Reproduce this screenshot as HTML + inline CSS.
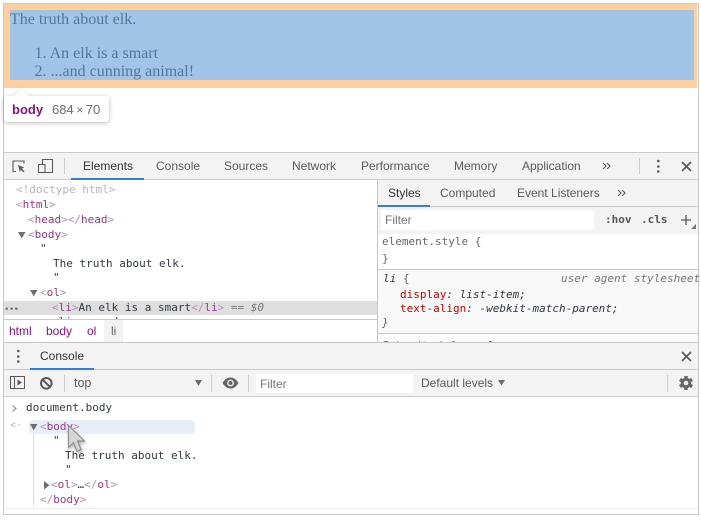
<!DOCTYPE html>
<html><head><meta charset="utf-8">
<style>
html,body{margin:0;padding:0;background:#fff;width:701px;height:521px;overflow:hidden}
#r{position:relative;width:701px;height:521px;overflow:hidden;background:#fff;filter:blur(.3px)}
#r div,#r span.a,#r svg{position:absolute}
.b{background:#c8c8c8}
.t{font:12px/14px "Liberation Sans",sans-serif;color:#5a5a5a;white-space:nowrap;height:14px}
.m{font:11px/14px "DejaVu Sans Mono","Liberation Mono",monospace;color:#303942;white-space:pre;height:14px;margin-top:1px}
.s{font:16px/18px "Liberation Serif",serif;color:#50779f;white-space:pre;margin-top:1px}
i{font-style:normal}
.p{color:#96378f}.g{color:#a5a5a5}.pg{color:#b98fb8}
.it{font-style:italic}
</style></head><body><div id="r">
<!-- page -->
<div style="left:4px;top:4px;width:693px;height:84px;background:#fdcfa0"></div>
<div style="left:10px;top:10px;width:684px;height:70px;background:#a2c5e7"></div>
<div class="s" style="left:10px;top:10px">The truth about elk.</div>
<div class="s" style="left:34.500px;top:44px">1. An elk is a smart</div>
<div class="s" style="left:34.500px;top:62px">2. ...and cunning animal!</div>
<!-- frame -->
<div class="b" style="left:3px;top:3px;width:696px;height:1px"></div>
<div class="b" style="left:3px;top:3px;width:1px;height:512px"></div>
<div class="b" style="left:698px;top:3px;width:1px;height:512px"></div>
<div class="b" style="left:3px;top:514px;width:696px;height:1px"></div>
<!-- tooltip -->
<div style="left:4px;top:96px;width:105px;height:26px;background:#fff;border-radius:3px;box-shadow:0 1px 5px rgba(0,0,0,.28)"></div>
<svg style="left:12px;top:88px;filter:drop-shadow(0 -1px 1px rgba(0,0,0,.08))" width="20" height="10"><path d="M1 9L9.500 .5L18 9V10H1Z" fill="#fff"/></svg>
<div class="t" style="left:12px;top:103px;font-size:13px;font-weight:bold;color:#881280">body</div>
<div class="t" style="left:52px;top:103px;font-size:13px;color:#6e6e6e">684<i style="margin:0 2.500px;font-size:12px">×</i>70</div>
<!-- main toolbar -->
<div style="left:4px;top:152px;width:694px;height:28px;background:#f3f3f3;border-top:1px solid #ccc;border-bottom:1px solid #ccc;box-sizing:border-box"></div>
<svg style="left:11px;top:159px" width="16" height="15" fill="none" stroke="#5a5a5a" stroke-width="1.100"><path d="M5 12.500H2V2H13V4.500"/><path d="M7 6L13 8.500L10.800 9.800L13.500 12.300L12.500 13.300L9.800 10.800L8.800 13Z" fill="#5a5a5a" stroke="none"/></svg>
<svg style="left:37px;top:158px" width="17" height="16" fill="none" stroke="#5a5a5a" stroke-width="1.100"><path d="M5.500 6V1.500H15.500V14.500H8"/><rect x="1.500" y="6.500" width="6.500" height="8"/></svg>
<div style="left:64px;top:158px;width:1px;height:16px;background:#ccc"></div>
<div class="t" style="left:83px;top:159px;color:#333">Elements</div>
<div class="t" style="left:156px;top:159px">Console</div>
<div class="t" style="left:224px;top:159px">Sources</div>
<div class="t" style="left:292px;top:159px">Network</div>
<div class="t" style="left:361px;top:159px">Performance</div>
<div class="t" style="left:454px;top:159px">Memory</div>
<div class="t" style="left:522px;top:159px">Application</div>
<div style="left:71px;top:178px;width:73px;height:2px;background:#3879d9"></div>
<svg style="left:602px;top:161px" width="10" height="10" fill="none" stroke="#5a5a5a" stroke-width="1.100"><path d="M1 2L4 5L1 8M5 2L8 5L5 8"/></svg>
<div style="left:639px;top:158px;width:1px;height:16px;background:#ccc"></div>
<svg style="left:656px;top:159px" width="5" height="15" fill="#5a5a5a"><circle cx="2.300" cy="2" r="1.300"/><circle cx="2.300" cy="7.500" r="1.300"/><circle cx="2.300" cy="12.500" r="1.300"/></svg>
<svg style="left:680px;top:160px" width="13" height="13" stroke="#5a5a5a" stroke-width="1.700"><path d="M2 2L11 11M11 2L2 11"/></svg>
<!-- elements tree -->
<div class="m" style="left:16px;top:182px;color:#b5b5b5">&lt;!doctype html&gt;</div>
<div class="m pg" style="left:16px;top:197px">&lt;<i class="p">html</i>&gt;</div>
<div class="m pg" style="left:28px;top:212px">&lt;<i class="p">head</i>&gt;&lt;/<i class="p">head</i>&gt;</div>
<svg style="left:18px;top:232px" width="8" height="7"><path d="M0 0H7.500L3.700 6.500Z" fill="#6e6e6e"/></svg>
<div class="m pg" style="left:28px;top:227px">&lt;<i class="p">body</i>&gt;</div>
<div class="m" style="left:40px;top:241px">"</div>
<div class="m" style="left:53px;top:256px">The truth about elk.</div>
<div class="m" style="left:53px;top:270px">"</div>
<svg style="left:30px;top:290px" width="8" height="7"><path d="M0 0H7.500L3.700 6.500Z" fill="#6e6e6e"/></svg>
<div class="m pg" style="left:40px;top:285px">&lt;<i class="p">ol</i>&gt;</div>
<div style="left:4px;top:301px;width:373px;height:14px;background:#dedede"></div>
<div class="m g" style="left:4px;top:302px;font-size:9px;letter-spacing:-.6px;color:#777">•••</div>
<div class="m pg" style="left:52px;top:300px">&lt;<i class="p">li</i>&gt;<i style="color:#303942">An elk is a smart</i>&lt;/<i class="p">li</i>&gt; <i style="color:#777">== <i class="it">$0</i></i></div>
<div style="left:52px;top:317px;width:100px;height:2px;overflow:hidden"><div class="m pg" style="left:0;top:-3px">&lt;<i class="p">li</i>&gt;<i style="color:#303942">...and cunning</i></div></div>
<!-- breadcrumbs -->
<div class="b" style="left:4px;top:319px;width:373px;height:1px"></div>
<div style="left:104px;top:320px;width:19px;height:22px;background:#f2f2f2"></div>
<div class="t" style="left:9px;top:324px;color:#881280">html</div>
<div class="t" style="left:46px;top:324px;color:#881280">body</div>
<div class="t" style="left:87px;top:324px;color:#881280">ol</div>
<div class="t" style="left:111px;top:324px;color:#666">li</div>
<!-- styles -->
<div class="b" style="left:377px;top:180px;width:1px;height:163px"></div>
<div style="left:378px;top:180px;width:320px;height:27px;background:#f3f3f3;border-bottom:1px solid #ccc;box-sizing:border-box"></div>
<div style="left:378px;top:205px;width:52px;height:2px;background:#3879d9"></div>
<div class="t" style="left:388px;top:186px;color:#333">Styles</div>
<div class="t" style="left:440px;top:186px">Computed</div>
<div class="t" style="left:517px;top:186px">Event Listeners</div>
<svg style="left:617px;top:188px" width="10" height="10" fill="none" stroke="#5a5a5a" stroke-width="1.100"><path d="M1 2L4 5L1 8M5 2L8 5L5 8"/></svg>
<div style="left:378px;top:207px;width:320px;height:27px;background:#f3f3f3"></div>
<div style="left:381px;top:210px;width:213px;height:20px;background:#fff"></div>
<div class="t" style="left:385px;top:213px;color:#757575">Filter</div>
<div class="m" style="left:605px;top:212px;font-weight:bold;color:#555">:hov</div>
<div class="m" style="left:641px;top:212px;font-weight:bold;color:#555">.cls</div>
<svg style="left:680px;top:213px" width="18" height="19"><path d="M1 7H11M6 2V12" stroke="#5a5a5a" stroke-width="1.300" fill="none"/><path d="M16 11V16H11Z" fill="#777"/></svg>
<div class="m" style="left:382px;top:234px;color:#666">element.style {</div>
<div class="m" style="left:382px;top:251px;color:#666">}</div>
<div class="b" style="left:378px;top:269px;width:320px;height:1px"></div>
<div style="left:378px;top:270px;width:320px;height:63px;background:#f8f8f8"></div>
<div class="m it" style="left:383px;top:271px">li <i style="color:#666">{</i></div>
<div class="m it" style="left:561px;top:271px;color:#777">user agent stylesheet</div>
<div class="m it" style="left:400px;top:287px"><i style="color:#c80000">display</i>: list-item;</div>
<div class="m it" style="left:400px;top:301px"><i style="color:#c80000">text-align</i>: -webkit-match-parent;</div>
<div class="m it" style="left:382px;top:315px;color:#666">}</div>
<div class="b" style="left:378px;top:333px;width:320px;height:1px"></div>
<div style="left:378px;top:334px;width:320px;height:8px;background:#fbfbfb;overflow:hidden"><div class="m it" style="left:4px;top:4px;color:#777">Inherited from <i class="p">ol</i></div></div>
<!-- drawer -->
<div class="b" style="left:4px;top:342px;width:694px;height:1px"></div>
<div style="left:4px;top:343px;width:694px;height:27px;background:#f3f3f3;border-bottom:1px solid #ccc;box-sizing:border-box"></div>
<svg style="left:16px;top:349px" width="5" height="15" fill="#5a5a5a"><circle cx="2.300" cy="2" r="1.300"/><circle cx="2.300" cy="7.500" r="1.300"/><circle cx="2.300" cy="12.500" r="1.300"/></svg>
<div class="t" style="left:40px;top:349px;color:#333">Console</div>
<div style="left:30px;top:368px;width:64px;height:2px;background:#3879d9"></div>
<svg style="left:680px;top:350px" width="13" height="13" stroke="#5a5a5a" stroke-width="1.700"><path d="M2 2L11 11M11 2L2 11"/></svg>
<!-- console toolbar -->
<div style="left:4px;top:370px;width:694px;height:27px;background:#f3f3f3;border-bottom:1px solid #ccc;box-sizing:border-box"></div>
<svg style="left:10px;top:376px" width="16" height="14" fill="none" stroke="#5a5a5a" stroke-width="1"><rect x=".5" y=".5" width="14" height="12"/><path d="M4.500 .5V12.500"/><path d="M7.500 3.500L12 6.500L7.500 9.500Z" fill="#5a5a5a" stroke="none"/></svg>
<svg style="left:39px;top:376px" width="15" height="15" fill="none" stroke="#5a5a5a" stroke-width="2"><circle cx="7.300" cy="7.300" r="5.300"/><path d="M3.500 3.500L11 11"/></svg>
<div style="left:64px;top:375px;width:1px;height:17px;background:#ccc"></div>
<div class="t" style="left:74px;top:376px;font-size:12.500px">top</div>
<svg style="left:195px;top:380px" width="8" height="7"><path d="M0 0H7L3.500 6Z" fill="#6e6e6e"/></svg>
<div style="left:211px;top:375px;width:1px;height:17px;background:#ccc"></div>
<svg style="left:222px;top:377px" width="17" height="12"><path d="M.5 6C3 2 5.500 .5 8.500 .5S14 2 16.500 6C14 10 11.500 11.500 8.500 11.500S3 10 .5 6Z" fill="#666"/><circle cx="8.500" cy="6" r="3.400" fill="#f3f3f3"/><circle cx="8.500" cy="6" r="2" fill="#666"/></svg>
<div style="left:248px;top:375px;width:1px;height:17px;background:#ccc"></div>
<div style="left:256px;top:374px;width:157px;height:19px;background:#fff"></div>
<div class="t" style="left:260px;top:377px;color:#757575">Filter</div>
<div class="t" style="left:421px;top:376px">Default levels</div>
<svg style="left:498px;top:380px" width="8" height="6"><path d="M0 0H7L3.500 5.500Z" fill="#6e6e6e"/></svg>
<div style="left:667px;top:375px;width:1px;height:17px;background:#ccc"></div>
<svg style="left:678px;top:375px" width="16" height="16"><g fill="#666"><circle cx="8" cy="8" r="5.300"/><rect x="6.300" y="1" width="3.400" height="14"/><rect x="6.300" y="1" width="3.400" height="14" transform="rotate(60 8 8)"/><rect x="6.300" y="1" width="3.400" height="14" transform="rotate(120 8 8)"/></g><circle cx="8" cy="8" r="2.300" fill="#f3f3f3"/></svg>
<!-- console -->
<svg style="left:11px;top:404px" width="7" height="9" fill="none" stroke="#8a8a8a" stroke-width="1.100"><path d="M1.500 1.500L5 4.500L1.500 7.500"/></svg>
<div class="m" style="left:26px;top:400px">document.body</div>
<div style="left:29px;top:420px;width:166px;height:14px;background:#e8eef8;border-radius:4px"></div>
<div class="m" style="left:10px;top:418px;color:#b5b5b5;font-size:10px">&lt;·</div>
<svg style="left:30px;top:424px" width="8" height="7"><path d="M0 0H7.500L3.700 6.500Z" fill="#6e6e6e"/></svg>
<div class="m pg" style="left:40px;top:419px">&lt;<i class="p">body</i>&gt;</div>
<div style="left:33px;top:434px;width:1px;height:73px;background:#ddd"></div>
<div class="m" style="left:53px;top:433px">"</div>
<div class="m" style="left:65px;top:448px">The truth about elk.</div>
<div class="m" style="left:65px;top:462px">"</div>
<svg style="left:44px;top:481px" width="6" height="9"><path d="M0 0V8.500L5.500 4.200Z" fill="#6e6e6e"/></svg>
<div class="m pg" style="left:51px;top:477px">&lt;<i class="p">ol</i>&gt;<i style="color:#303942">…</i>&lt;/<i class="p">ol</i>&gt;</div>
<div class="m pg" style="left:40px;top:492px">&lt;/<i class="p">body</i>&gt;</div>
<div style="left:4px;top:508px;width:694px;height:1px;background:#ececec"></div>
<!-- cursor -->
<svg style="left:64px;top:423px" width="24" height="34"><path d="M4.500 2.500V24.500L9.500 19.500L13 28.500L17 26.500L13.500 18H20.500Z" fill="#d6d6d6" stroke="#8f8f8f" stroke-width="1.200" stroke-linejoin="round" style="filter:drop-shadow(1px 2px 1.500px rgba(0,0,0,.3))"/></svg>
</div></body></html>
